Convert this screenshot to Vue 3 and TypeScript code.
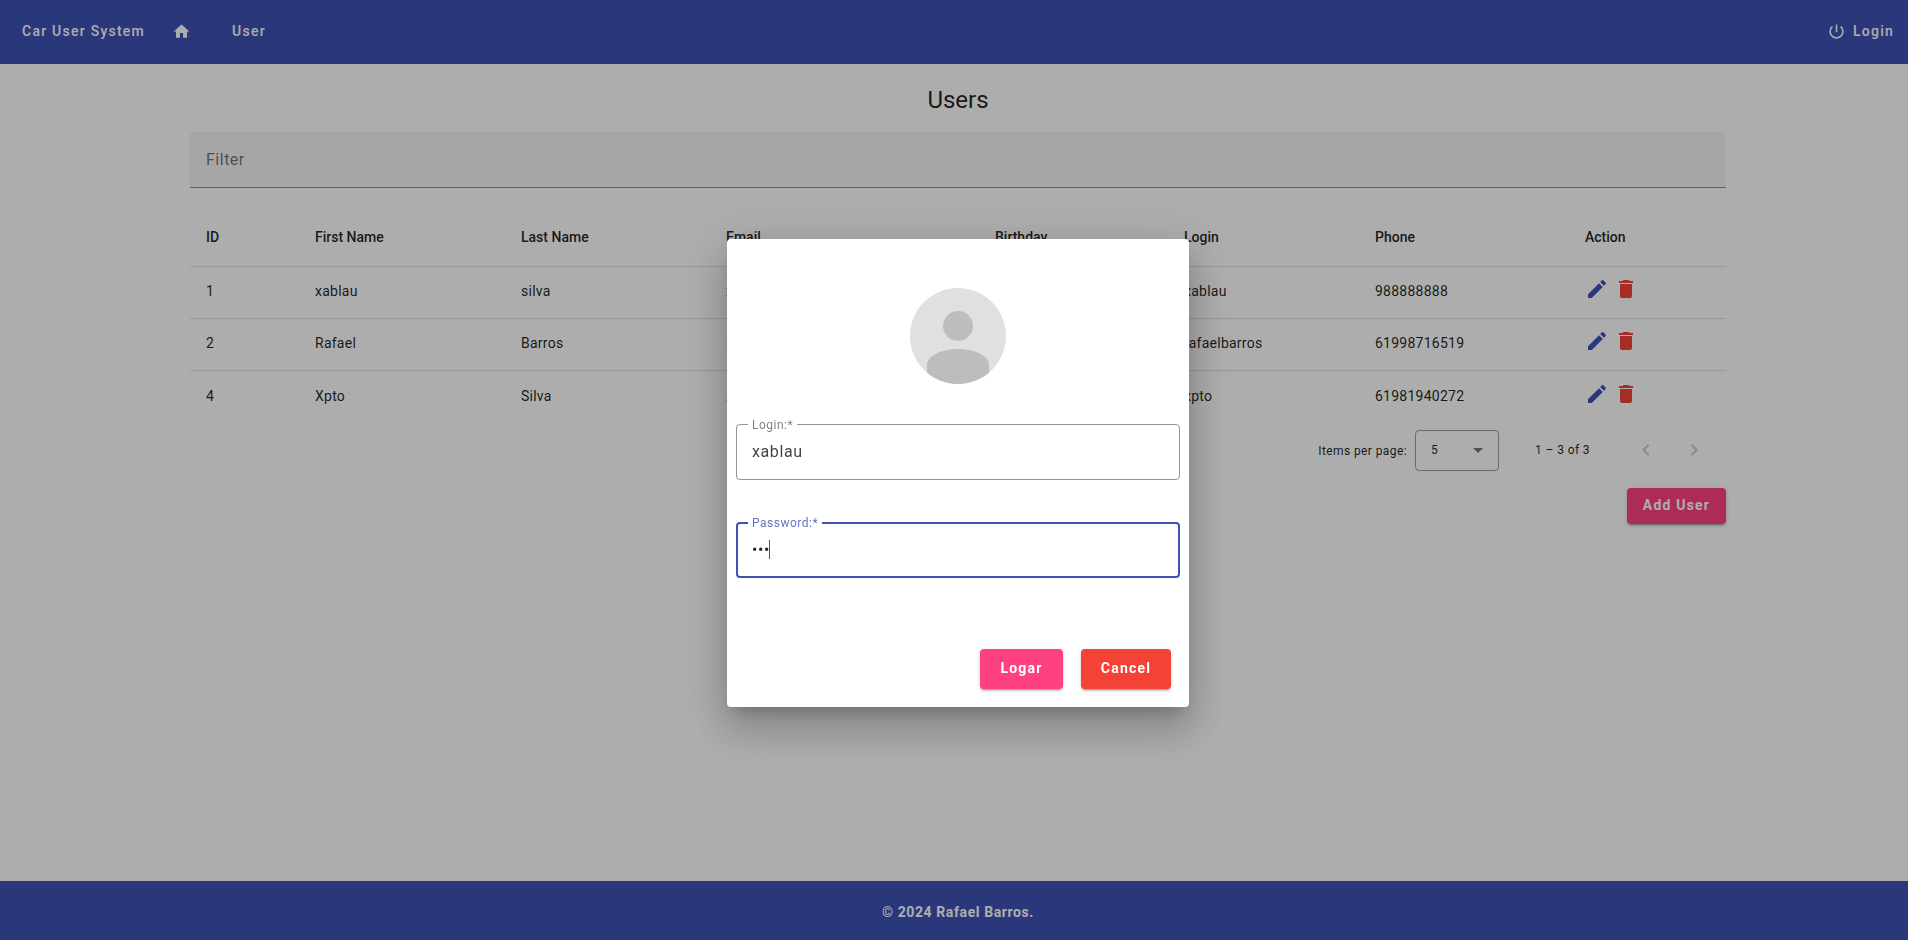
<script setup lang="ts">
import { ref } from 'vue';

interface User {
  id: number;
  firstName: string;
  lastName: string;
  email: string;
  birthday: string;
  login: string;
  phone: string;
}

const users: User[] = [
  { id: 1, firstName: 'xablau', lastName: 'silva', email: 'xablau@gmail.com', birthday: '01/01/1990', login: 'xablau', phone: '988888888' },
  { id: 2, firstName: 'Rafael', lastName: 'Barros', email: 'rafael@gmail.com', birthday: '01/01/1990', login: 'rafaelbarros', phone: '61998716519' },
  { id: 4, firstName: 'Xpto', lastName: 'Silva', email: 'xpto@gmail.com', birthday: '01/01/1990', login: 'xpto', phone: '61981940272' },
];

const columns = ['ID', 'First Name', 'Last Name', 'Email', 'Birthday', 'Login', 'Phone', 'Action'];

const login = ref('xablau');
const password = ref('abc');
</script>

<template>
  <div class="page">
    <header class="toolbar">
      <span class="brand">Car User System</span>
      <svg class="home" viewBox="0 0 24 24"><path d="M10 20v-6h4v6h5v-8h3L12 3 2 12h3v8z" /></svg>
      <span class="nav-user">User</span>
      <span class="spacer"></span>
      <svg class="power" viewBox="0 0 24 24"><path d="M13 3h-2v10h2V3zm4.83 2.17l-1.42 1.42C17.99 7.86 19 9.81 19 12c0 3.87-3.13 7-7 7s-7-3.13-7-7c0-2.19 1.01-4.14 2.58-5.42L6.17 5.17C4.23 6.82 3 9.26 3 12c0 4.97 4.03 9 9 9s9-4.03 9-9c0-2.74-1.23-5.18-3.17-6.83z" /></svg>
      <span class="nav-login">Login</span>
    </header>

    <main class="content">
      <h2 class="title">Users</h2>
      <div class="filter">Filter</div>

      <table class="users">
        <colgroup>
          <col style="width: 109px" />
          <col style="width: 206px" />
          <col style="width: 205px" />
          <col style="width: 269px" />
          <col style="width: 189px" />
          <col style="width: 191px" />
          <col style="width: 210px" />
          <col style="width: 157px" />
        </colgroup>
        <thead>
          <tr>
            <th v-for="col in columns" :key="col">{{ col }}</th>
          </tr>
        </thead>
        <tbody>
          <tr v-for="u in users" :key="u.id">
            <td>{{ u.id }}</td>
            <td>{{ u.firstName }}</td>
            <td>{{ u.lastName }}</td>
            <td>{{ u.email }}</td>
            <td>{{ u.birthday }}</td>
            <td>{{ u.login }}</td>
            <td>{{ u.phone }}</td>
            <td>
              <div class="actions">
                <svg class="edit" viewBox="0 0 24 24"><path d="M3 17.25V21h3.75L17.81 9.94l-3.75-3.75L3 17.25zM20.71 7.04a1 1 0 0 0 0-1.41l-2.34-2.34a1 1 0 0 0-1.41 0l-1.83 1.83 3.75 3.75 1.83-1.83z" /></svg>
                <svg class="delete" viewBox="0 0 24 24"><path d="M6 19c0 1.1.9 2 2 2h8c1.1 0 2-.9 2-2V7H6v12zM19 4h-3.5l-1-1h-5l-1 1H5v2h14V4z" /></svg>
              </div>
            </td>
          </tr>
        </tbody>
      </table>

      <div class="paginator">
        <span class="per-page">Items per page:</span>
        <div class="page-size">
          <span>5</span>
          <i class="caret-down"></i>
        </div>
        <span class="range">1 – 3 of 3</span>
        <button class="page-btn" disabled>
          <svg viewBox="0 0 24 24"><path d="M15.41 7.41 14 6l-6 6 6 6 1.41-1.41L10.83 12z" /></svg>
        </button>
        <button class="page-btn" disabled>
          <svg viewBox="0 0 24 24"><path d="M10 6 8.59 7.41 13.17 12l-4.58 4.59L10 18l6-6z" /></svg>
        </button>
      </div>

      <div class="add-row">
        <button class="btn add">Add User</button>
      </div>
    </main>

    <footer class="footer">© 2024 Rafael Barros.</footer>

    <div class="overlay">
      <div class="dialog">
        <svg class="avatar" viewBox="0 0 96 96">
          <defs>
            <clipPath id="avatar-clip"><circle cx="48" cy="48" r="48" /></clipPath>
          </defs>
          <circle cx="48" cy="48" r="48" fill="#e0e0e0" />
          <circle cx="48" cy="38" r="15" fill="#bdbdbd" />
          <path clip-path="url(#avatar-clip)" d="M17 77c0-9 14-16 31-16s31 7 31 16v19H17z" fill="#bdbdbd" />
        </svg>

        <fieldset class="field login-field">
          <legend>Login:*</legend>
          <input v-model="login" type="text" />
        </fieldset>

        <fieldset class="field focused">
          <legend>Password:*</legend>
          <div class="pass-row">
            <input v-model="password" class="pass" type="password" />
            <span class="text-caret"></span>
          </div>
        </fieldset>

        <div class="dialog-actions">
          <button class="btn logar">Logar</button>
          <button class="btn cancel">Cancel</button>
        </div>
      </div>
    </div>
  </div>
</template>

<style>
html, body {
  overflow: hidden;
}
</style>

<style scoped>
.page {
  display: flex;
  flex-direction: column;
  min-height: 100vh;
  font-family: Roboto, "Liberation Sans", sans-serif;
  color: rgba(0, 0, 0, 0.87);
  background: #fff;
}
.toolbar {
  display: flex;
  align-items: center;
  height: 64px;
  padding: 0 14px 2px 22px;
  box-sizing: border-box;
  background: #3f51b5;
  color: #fff;
  font-size: 14px;
  font-weight: 500;
  letter-spacing: 1.25px;
}
.toolbar svg {
  fill: #fff;
  width: 19px;
  height: 19px;
}
.home {
  margin-left: 27px;
}
.nav-user {
  margin-left: 41px;
}
.spacer {
  flex: 1;
}
.power {
  margin-right: 7px;
}
.content {
  flex: 1;
  padding: 20px 182px 0 190px;
}
.title {
  margin: 0;
  font-size: 24px;
  font-weight: 400;
  line-height: 32px;
  text-align: center;
}
.filter {
  margin-top: 16px;
  height: 56px;
  padding-left: 16px;
  box-sizing: border-box;
  display: flex;
  align-items: center;
  background: #f5f5f5;
  border-bottom: 1px solid rgba(0, 0, 0, 0.42);
  border-radius: 4px 4px 0 0;
  font-size: 16px;
  letter-spacing: 0.5px;
  color: rgba(0, 0, 0, 0.55);
}
.users {
  margin-top: 22px;
  width: 1536px;
  table-layout: fixed;
  border-collapse: separate;
  border-spacing: 0;
  font-size: 14px;
}
.users th {
  height: 57px;
  box-sizing: border-box;
  padding: 0 0 2px 16px;
  text-align: left;
  font-weight: 500;
  border-bottom: 1px solid rgba(0, 0, 0, 0.12);
}
.users td {
  height: 52px;
  box-sizing: border-box;
  padding: 0 0 3px 16px;
  border-bottom: 1px solid rgba(0, 0, 0, 0.12);
  white-space: nowrap;
  letter-spacing: 0.25px;
}
.users tbody tr:last-child td {
  border-bottom: none;
}
.actions {
  display: flex;
  gap: 5px;
  margin-bottom: 4px;
}
.actions svg {
  width: 24px;
  height: 24px;
}
.edit {
  fill: #3f51b5;
}
.delete {
  fill: #f44336;
}
.paginator {
  display: flex;
  align-items: center;
  justify-content: flex-end;
  height: 56px;
  margin-top: -1px;
  padding-right: 8px;
  font-size: 12px;
  letter-spacing: 0.4px;
}
.per-page {
  margin: 2px 8px 0 0;
}
.page-size {
  display: flex;
  align-items: center;
  justify-content: space-between;
  width: 84px;
  height: 41px;
  padding: 0 15px;
  box-sizing: border-box;
  border: 1px solid rgba(0, 0, 0, 0.38);
  border-radius: 4px;
}
.caret-down {
  width: 0;
  height: 0;
  border-left: 5px solid transparent;
  border-right: 5px solid transparent;
  border-top: 5px solid rgba(0, 0, 0, 0.54);
}
.range {
  margin: 0 32px 0 36px;
}
.page-btn {
  width: 48px;
  height: 48px;
  padding: 12px;
  border: none;
  background: none;
}
.page-btn svg {
  display: block;
  fill: rgba(0, 0, 0, 0.2);
}
.add-row {
  display: flex;
  justify-content: flex-end;
  margin-top: 10px;
}
.btn {
  padding: 0 0 2px;
  border: none;
  border-radius: 4px;
  color: #fff;
  font-family: inherit;
  font-size: 14px;
  font-weight: 700;
  letter-spacing: 1.2px;
  box-shadow: 0 3px 1px -2px rgba(0, 0, 0, 0.2), 0 2px 2px 0 rgba(0, 0, 0, 0.14), 0 1px 5px 0 rgba(0, 0, 0, 0.12);
}
.add {
  width: 99px;
  height: 36px;
  background: #ff4081;
}
.footer {
  height: 59px;
  padding: 3px 0 0 8px;
  box-sizing: border-box;
  display: flex;
  align-items: center;
  justify-content: center;
  background: #3f51b5;
  color: #fff;
  font-size: 14px;
  font-weight: 700;
  letter-spacing: 0.6px;
}
.overlay {
  position: fixed;
  inset: 0;
  padding: 6px 0 0 8px;
  display: flex;
  align-items: center;
  justify-content: center;
  background: rgba(0, 0, 0, 0.32);
}
.dialog {
  width: 462px;
  height: 468px;
  padding: 49px 9px 18px;
  box-sizing: border-box;
  display: flex;
  flex-direction: column;
  background: #fff;
  border-radius: 4px;
  box-shadow: 0 11px 15px -7px rgba(0, 0, 0, 0.2), 0 24px 38px 3px rgba(0, 0, 0, 0.14), 0 9px 46px 8px rgba(0, 0, 0, 0.12);
}
.avatar {
  width: 96px;
  height: 96px;
  align-self: center;
  margin-bottom: 33.5px;
}
.field {
  height: 62px;
  margin: 0 0 36px;
  padding: 0 15px;
  box-sizing: border-box;
  border: 1px solid rgba(0, 0, 0, 0.42);
  border-radius: 4px;
  display: flex;
  align-items: center;
}
.field legend {
  margin-left: -4px;
  padding: 0 4px;
  font-size: 12px;
  line-height: 14px;
  letter-spacing: 0.5px;
  color: rgba(0, 0, 0, 0.5);
}
.field input {
  width: 100%;
  margin-top: 10px;
  padding: 0;
  border: none;
  outline: none;
  background: none;
  font-family: inherit;
  font-size: 16px;
  letter-spacing: 0.6px;
  color: rgba(0, 0, 0, 0.75);
}
.focused {
  border: 2px solid #3f51b5;
  padding: 0 14px;
}
.focused legend {
  color: #6573c3;
}
.pass-row {
  display: flex;
  align-items: center;
  margin-top: 10px;
}
.field .pass {
  width: 17px;
  margin-top: 0;
  color: rgba(0, 0, 0, 0.87);
}
.text-caret {
  width: 1px;
  height: 19px;
  background: #3f51b5;
}
.dialog-actions {
  margin-top: auto;
  display: flex;
  justify-content: flex-end;
  gap: 18px;
  padding-right: 9px;
}
.logar,
.cancel {
  height: 40px;
}
.logar {
  width: 83px;
  background: #ff4081;
}
.cancel {
  width: 90px;
  background: #f44336;
}
</style>
